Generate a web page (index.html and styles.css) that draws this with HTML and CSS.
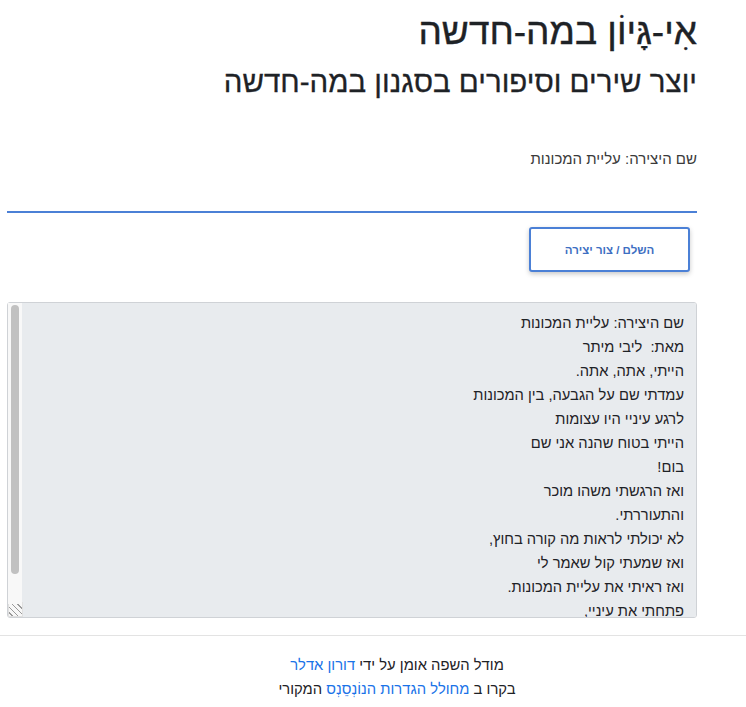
FILE: index.html
```html
<!DOCTYPE html>
<html lang="he" dir="rtl">
<head>
<meta charset="utf-8">
<link rel="stylesheet" href="styles.css">
</head>
<body>
<main class="page">
  <header class="head">
    <h1 class="title">אִי-גָּיוֹן במה-חדשה</h1>
    <h2 class="subtitle">יוצר שירים וסיפורים בסגנון במה-חדשה</h2>
  </header>
  <label class="label" for="name">שם היצירה: עליית המכונות</label>
  <input class="input" id="name" type="text" value="">
  <div class="actions">
    <button class="btn" type="button">השלם / צור יצירה</button>
  </div>
  <div class="output-wrap">
    <textarea class="output" dir="rtl">שם היצירה: עליית המכונות
מאת:  ליבי מיתר
הייתי, אתה, אתה.
עמדתי שם על הגבעה, בין המכונות
לרגע עיניי היו עצומות
הייתי בטוח שהנה אני שם
בום!
ואז הרגשתי משהו מוכר
והתעוררתי.
לא יכולתי לראות מה קורה בחוץ,
ואז שמעתי קול שאמר לי
ואז ראיתי את עליית המכונות.
פתחתי את עיניי,
וראיתי את עצמי.</textarea>
    <div class="scrollbar" aria-hidden="true"><div class="thumb"></div></div>
  </div>
</main>
<footer class="footer">
  <p class="foot-line">מודל השפה אומן על ידי <a class="link" href="#">דורון אדלר</a></p>
  <p class="foot-line">בקרו ב <a class="link" href="#">מחולל הגדרות הנוֹנְסֵנְס</a> המקורי</p>
</footer>
</body>
</html>
```

FILE: styles.css
```css
html, body {
  margin: 0;
  padding: 0;
  background: #ffffff;
}
body {
  font-family: "Liberation Sans", Arial, sans-serif;
  color: #212529;
}
.page {
  width: 690px;
  margin: 0 49px 0 7px;
  display: flex;
  flex-direction: column;
  padding-top: 10px;
  padding-bottom: 17px;
}
.head {
  text-align: right;
}
.title {
  margin: 0;
  font-size: 37px;
  font-weight: 500;
  line-height: 44px;
  color: #1e2226;
  -webkit-text-stroke: 0.4px #1e2226;
}
.subtitle {
  margin: 10px 0 0 0;
  font-size: 29.5px;
  font-weight: 500;
  line-height: 36px;
  color: #1e2226;
  -webkit-text-stroke: 0.3px #1e2226;
}
.label {
  margin-top: 49px;
  font-size: 15px;
  line-height: 20px;
  color: #3a3a3a;
}
.input {
  margin-top: 20px;
  height: 22px;
  border: none;
  border-bottom: 2px solid #4b80d6;
  background: transparent;
  outline: none;
  padding: 0;
  font-size: 14px;
  font-family: inherit;
}
.actions {
  display: flex;
  margin-top: 14px;
  padding-right: 7px;
}
.btn {
  width: 161px;
  height: 45px;
  background: #fff;
  border: 2px solid #4b80d6;
  border-radius: 3px;
  box-shadow: 0 2px 5px rgba(0,0,0,0.22);
  color: #3e6fc2;
  font-family: inherit;
  font-weight: bold;
  font-size: 11.5px;
  cursor: pointer;
}
.output-wrap {
  position: relative;
  margin-top: 30px;
  display: flex;
  flex-direction: column;
}
.output {
  height: 316px;
  box-sizing: border-box;
  background: #e8ebee;
  border: 1px solid #cfd2d6;
  border-radius: 3px;
  padding: 8px 12px 4px 12px;
  font-family: inherit;
  font-size: 14.7px;
  line-height: 24px;
  color: #1e2226;
  resize: vertical;
  overflow-y: scroll;
}
.output::-webkit-resizer {
  background:
    repeating-linear-gradient(45deg, #f7f7f7 0 2px, #9a9a9a 2px 3px, #f7f7f7 3px 4px);
  border: 1px solid #e0e0e0;
}
.scrollbar {
  position: absolute;
  left: 1px;
  top: 1px;
  width: 14px;
  height: 301px;
  background: #f8f8f8;
  display: flex;
  justify-content: center;
  padding-top: 2px;
  box-sizing: border-box;
}
.thumb {
  width: 8px;
  height: 269px;
  background: #c1c1c1;
  border-radius: 4px;
}
.footer {
  border-top: 1px solid #e3e3e3;
  text-align: center;
  padding: 17px 0 0 48px;
}
.foot-line {
  margin: 0;
  font-size: 14.8px;
  line-height: 24px;
  color: #1e2226;
}
.link {
  color: #1a73e8;
  text-decoration: none;
}
```
